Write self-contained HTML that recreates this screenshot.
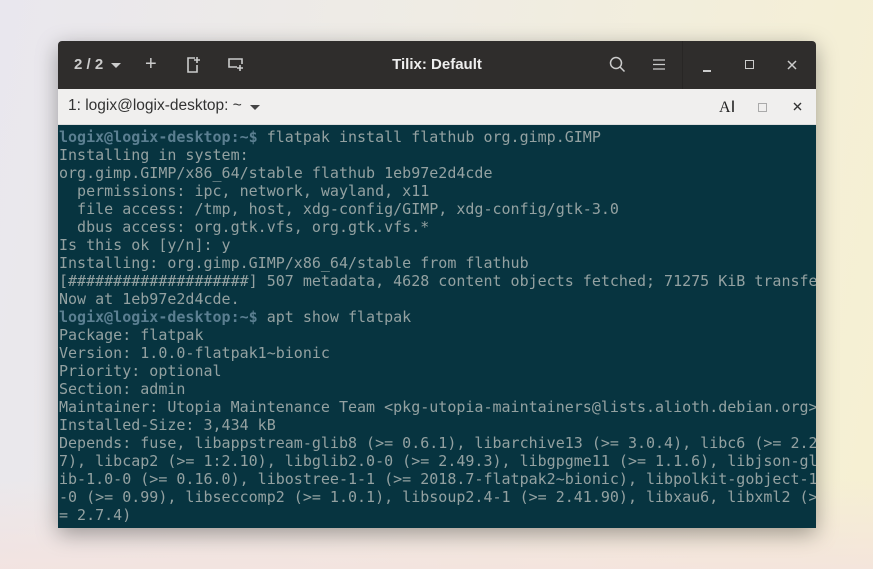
<!DOCTYPE html>
<html><head><meta charset="utf-8"><style>
html,body{margin:0;padding:0;width:873px;height:569px;overflow:hidden}
body{background:linear-gradient(100deg,#e9e7ee 0%,#efece4 45%,#f6f0d2 100%);position:relative;font-family:"Liberation Sans",sans-serif}
.bot{position:absolute;left:0;right:0;bottom:0;height:90px;background:linear-gradient(180deg,rgba(245,228,225,0) 0%,rgba(244,226,222,.8) 100%)}
.win{position:absolute;left:58px;top:41px;width:758px;height:487px;box-shadow:0 6px 22px rgba(0,0,0,.35);border-radius:4px 4px 0 0;overflow:hidden}
.tb{height:48px;background:#2f2d2c;position:relative;color:#ddd}
.tabs{height:36px;background:#f0efee;position:relative;border-bottom:1px solid #ddd;box-sizing:border-box}
.term{height:403px;background:#073440;overflow:hidden;padding:3px 0 0 1px;box-sizing:border-box}
pre{margin:0;font-family:"DejaVu Sans Mono",monospace;font-size:15px;line-height:18px;color:#93a1a1;white-space:pre}
.p{color:#5b7f91;font-weight:bold}
.a{position:absolute}
</style></head><body>
<div class="bot"></div>
<div class="win">
 <div class="tb">
  <div class="a" style="left:16px;top:15px;font-size:15px;color:#ccc;font-weight:bold">2 / 2</div>
  <div class="a" style="left:53px;top:22px;border-left:5px solid transparent;border-right:5px solid transparent;border-top:5px solid #ccc"></div>
  <div class="a" style="left:87px;top:12px;font-size:20px;color:#ccc">+</div>
  <svg class="a" style="left:128px;top:15px" width="16" height="18" viewBox="0 0 16 18" fill="none" stroke="#ccc" stroke-width="1.6"><path d="M9 2H2v14h9V9"/><path d="M11 1v6M8 4h6"/></svg>
  <svg class="a" style="left:169px;top:16px" width="18" height="15" viewBox="0 0 18 15" fill="none" stroke="#ccc" stroke-width="1.6"><path d="M10 10H2V2h13v5"/><path d="M13 8v6M10 11h6"/></svg>
  <div class="a" style="left:0;width:758px;top:15px;text-align:center;font-size:15px;font-weight:bold;color:#eee">Tilix: Default</div>
  <svg class="a" style="left:551px;top:15px" width="17" height="17" viewBox="0 0 17 17" fill="none" stroke="#ccc" stroke-width="1.5"><circle cx="7" cy="7" r="5.5"/><path d="M11 11l4.5 4.5"/></svg>
  <svg class="a" style="left:595px;top:18px" width="12" height="11" viewBox="0 0 12 11" stroke="#ccc" stroke-width="1.3"><path d="M0 1h12M0 5.5h12M0 10h12"/></svg>
  <div class="a" style="left:624px;top:0;width:1px;height:48px;background:#282625"></div>
  <div class="a" style="left:645px;top:29px;width:8px;height:1.5px;background:#ccc"></div>
  <div class="a" style="left:687px;top:19px;width:7px;height:7px;border:1.5px solid #ccc"></div>
  <svg class="a" style="left:729px;top:19px" width="10" height="10" viewBox="0 0 10 10" stroke="#ccc" stroke-width="1.5"><path d="M1 1l8 8M9 1l-8 8"/></svg>
 </div>
 <div class="tabs">
  <div class="a" style="left:10px;top:8px;font-size:15.5px;color:#333">1: logix@logix-desktop: ~</div>
  <div class="a" style="left:192px;top:16px;border-left:5px solid transparent;border-right:5px solid transparent;border-top:5px solid #444"></div>
  <div class="a" style="left:661px;top:8px;font-family:'Liberation Serif',serif;font-size:16px;color:#222">A<span style="font-size:17px;font-family:'Liberation Sans'">I</span></div>
  <div class="a" style="left:700px;top:14px;width:7px;height:7px;border:1px solid #aaa"></div>
  <svg class="a" style="left:735px;top:13px" width="9" height="9" viewBox="0 0 9 9" stroke="#333" stroke-width="1.4"><path d="M1 1l7 7M8 1l-7 7"/></svg>
 </div>
 <div class="term"><pre><span class="p">logix@logix-desktop:~$</span> flatpak install flathub org.gimp.GIMP
Installing in system:
org.gimp.GIMP/x86_64/stable flathub 1eb97e2d4cde
  permissions: ipc, network, wayland, x11
  file access: /tmp, host, xdg-config/GIMP, xdg-config/gtk-3.0
  dbus access: org.gtk.vfs, org.gtk.vfs.*
Is this ok [y/n]: y
Installing: org.gimp.GIMP/x86_64/stable from flathub
[####################] 507 metadata, 4628 content objects fetched; 71275 KiB transfe
Now at 1eb97e2d4cde.
<span class="p">logix@logix-desktop:~$</span> apt show flatpak
Package: flatpak
Version: 1.0.0-flatpak1~bionic
Priority: optional
Section: admin
Maintainer: Utopia Maintenance Team &lt;pkg-utopia-maintainers@lists.alioth.debian.org&gt;
Installed-Size: 3,434 kB
Depends: fuse, libappstream-glib8 (&gt;= 0.6.1), libarchive13 (&gt;= 3.0.4), libc6 (&gt;= 2.2
7), libcap2 (&gt;= 1:2.10), libglib2.0-0 (&gt;= 2.49.3), libgpgme11 (&gt;= 1.1.6), libjson-gl
ib-1.0-0 (&gt;= 0.16.0), libostree-1-1 (&gt;= 2018.7-flatpak2~bionic), libpolkit-gobject-1
-0 (&gt;= 0.99), libseccomp2 (&gt;= 1.0.1), libsoup2.4-1 (&gt;= 2.41.90), libxau6, libxml2 (&gt;
= 2.7.4)</pre></div>
</div>
</body></html>
